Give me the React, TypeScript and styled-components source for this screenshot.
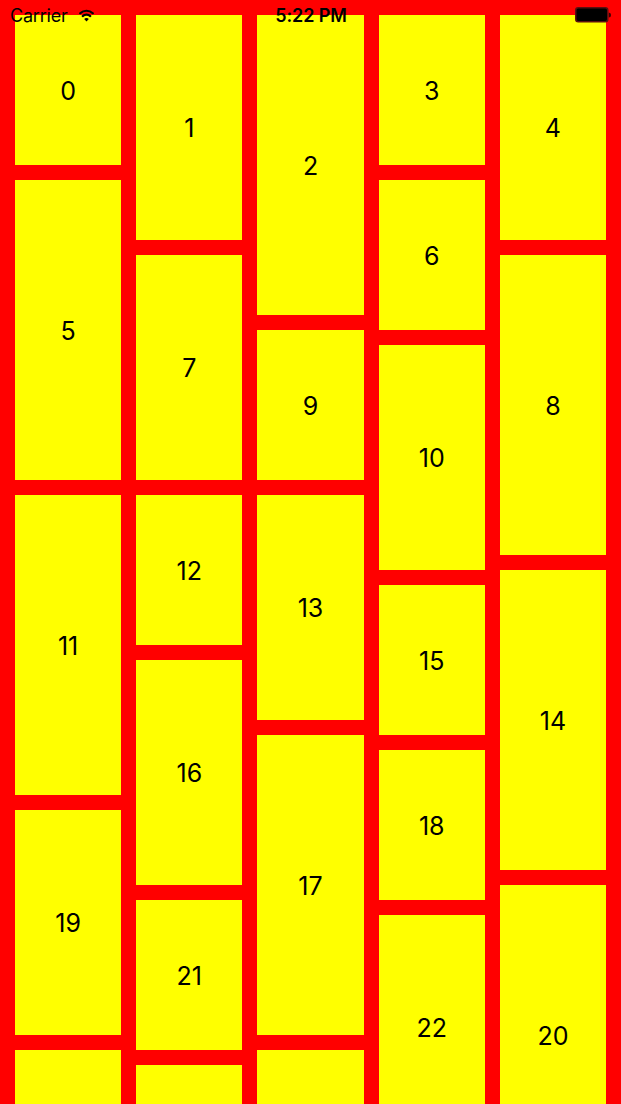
import React from "react";
import styled, { createGlobalStyle } from "styled-components";

const GlobalStyle = createGlobalStyle`
  html, body { margin: 0; padding: 0; background: #ff0000; }
  body { font-family: Inter, "Liberation Sans", Arial, sans-serif; overflow: hidden; }
`;

const Screen = styled.div`
  position: relative;
  width: 621px;
  height: 1104px;
  overflow: hidden;
  background: #ff0000;
`;

const Board = styled.div`
  display: flex;
  gap: 15px;
  padding: 15px;
  align-items: flex-start;
`;

const Column = styled.div`
  flex: 1 1 0;
  min-width: 0;
  display: flex;
  flex-direction: column;
  gap: 15px;
`;

const Cell = styled.div<{ $h: number }>`
  height: ${(p) => p.$h}px;
  flex: none;
  box-sizing: border-box;
  padding-top: 1px;
  background: #ffff00;
  display: flex;
  align-items: center;
  justify-content: center;
  color: #000;
  font-size: 25px;
  font-weight: 400;
`;

const StatusBar = styled.div`
  position: absolute;
  top: 0;
  left: 0;
  right: 0;
  height: 30px;
  display: flex;
  align-items: center;
  justify-content: space-between;
  padding: 0 9px 0 10px;
  color: #000;
  font-size: 18px;
`;

const Left = styled.div`
  display: flex;
  align-items: center;
  gap: 11px;
  width: 160px;
  letter-spacing: -0.2px;
`;

const Time = styled.div`
  font-weight: 600;
  letter-spacing: -0.1px;
`;

const Right = styled.div`
  width: 160px;
  display: flex;
  justify-content: flex-end;
`;

const heights = [150, 225, 300];

function layout(count: number, cols: number) {
  const tops = new Array(cols).fill(0);
  const columns: { id: number; h: number }[][] = Array.from({ length: cols }, () => []);
  for (let i = 0; i < count; i++) {
    let best = 0;
    for (let c = 1; c < cols; c++) if (tops[c] < tops[best]) best = c;
    const h = heights[i % 3];
    columns[best].push({ id: i, h });
    tops[best] += h + 15;
  }
  return columns;
}

const Wifi = () => (
  <svg width="15" height="13" viewBox="0 0 15 13">
    <path d="M1.2 4.3 A9 9 0 0 1 13.8 4.3" stroke="#000" strokeWidth="2.2" fill="none" strokeLinecap="round" />
    <path d="M3.7 7.1 A5.4 5.4 0 0 1 11.3 7.1" stroke="#000" strokeWidth="2.2" fill="none" strokeLinecap="round" />
    <path d="M7.5 12.4 L5.2 9.9 A3.1 3.1 0 0 1 9.8 9.9 Z" fill="#000" />
  </svg>
);

const Battery = () => (
  <svg width="37" height="16" viewBox="0 0 37 16">
    <rect x="0.75" y="0.75" width="32" height="14" rx="2.5" fill="#000" stroke="#5a1010" strokeWidth="1.5" />
    <path d="M33.8 5.5 Q36 5.5 36 8 Q36 10.5 33.8 10.5 Z" fill="#3a0000" />
  </svg>
);

export default function App() {
  const columns = layout(26, 5);
  return (
    <Screen>
      <GlobalStyle />
      <Board>
        {columns.map((col, ci) => (
          <Column key={ci}>
            {col.map((c) => (
              <Cell key={c.id} $h={c.h}>
                {c.id <= 22 ? c.id : ""}
              </Cell>
            ))}
          </Column>
        ))}
      </Board>
      <StatusBar>
        <Left>
          <span>Carrier</span>
          <Wifi />
        </Left>
        <Time>5:22 PM</Time>
        <Right>
          <Battery />
        </Right>
      </StatusBar>
    </Screen>
  );
}
